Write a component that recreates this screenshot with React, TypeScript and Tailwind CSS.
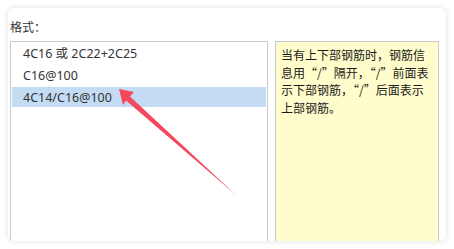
import React from "react";

export default function App() {
  const font = { fontFamily: '"Noto Sans", "Noto Sans CJK SC", sans-serif' };
  const cjk = { fontFamily: '"Noto Sans CJK SC", "Noto Sans", sans-serif' };
  return (
    <div className="relative w-[454px] h-[249px] bg-white overflow-hidden" style={font}>
      <div className="ml-[8px] mt-[8px] w-[438px] h-[233px] rounded-[6px] bg-white overflow-hidden shadow-[0_0_6px_rgba(0,0,0,0.13)] pl-[2px] pr-[7px] pt-[10px]">
        <div className="h-[18px] leading-[18px] text-[12px] text-[#333]" style={cjk}>格式：</div>
        <div className="mt-[5px] flex gap-[7px]">
          <div className="w-[258px] h-[220px] shrink-0 border border-[#c8c8c8] bg-white px-px pt-0">
            {["4C16 或 2C22+2C25", "C16@100", "4C14/C16@100"].map((t, i) => (
              <div key={t} className="h-[22px] py-px">
                <div
                  className={
                    i === 2
                      ? "h-[20px] leading-[21px] pl-[11px] text-[12.5px] text-[#333] bg-[#c4dcf3]"
                      : "h-[20px] leading-[21px] pl-[11px] text-[12.5px] text-[#333]"
                  }
                >
                  {t}
                </div>
              </div>
            ))}
          </div>
          <div
            className="w-[164px] h-[220px] shrink-0 border border-[#c8c8c8] bg-[#fffdcc] pl-[5px] pt-[4px] text-[12px] leading-[17.7px] text-[#1a1a1a] whitespace-nowrap"
            style={cjk}
          >
            <div>当有上下部钢筋时，钢筋信</div>
            <div>息用“/”隔开，“/”前面表</div>
            <div>示下部钢筋，“/”后面表示</div>
            <div>上部钢筋。</div>
          </div>
        </div>
      </div>
      <svg className="absolute left-0 top-0" width="454" height="249" viewBox="0 0 454 249">
        <polygon
          points="119,89 134,92 130,96.5 236,195 126,100.5 123,105"
          fill="#f5475e"
        />
      </svg>
    </div>
  );
}
